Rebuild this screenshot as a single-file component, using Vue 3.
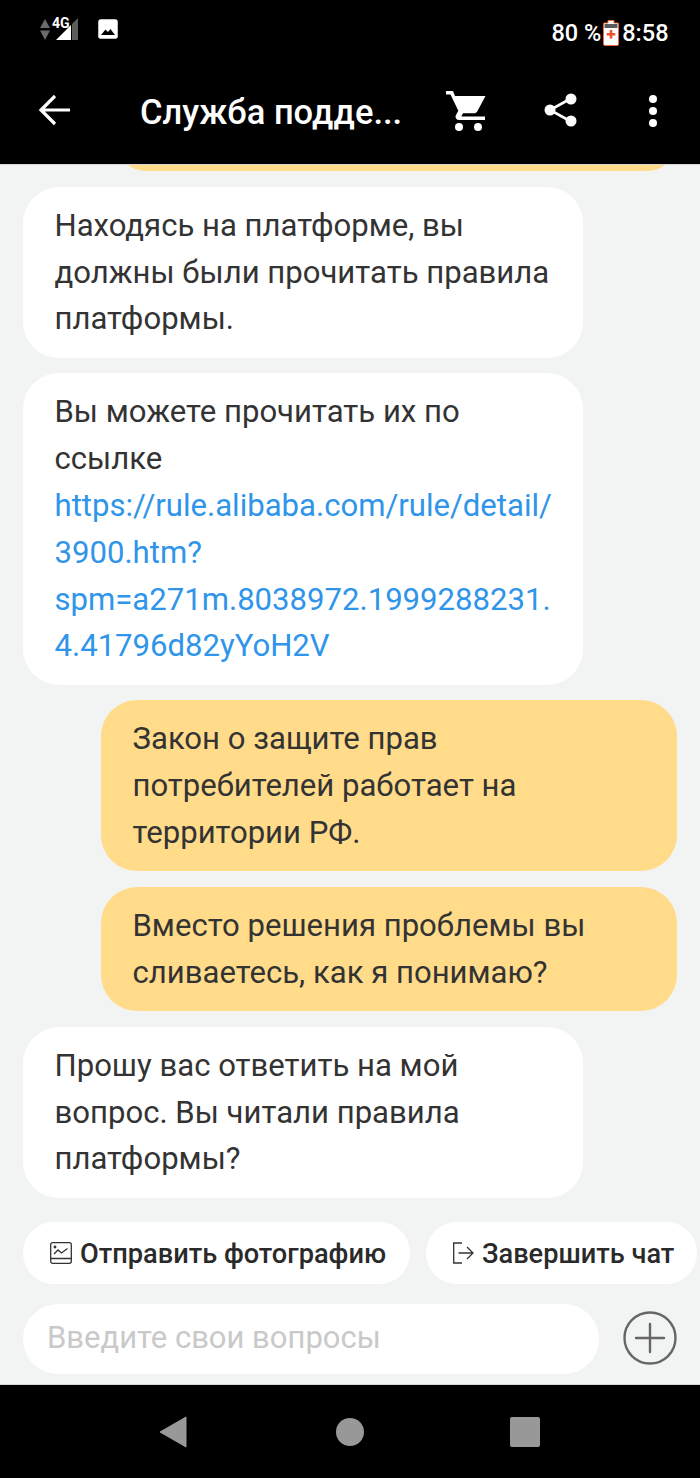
<script setup>
const messages = [
  { id: 1, mine: false, lines: ['Находясь на платформе, вы', 'должны были прочитать правила', 'платформы.'] },
  {
    id: 2,
    mine: false,
    lines: ['Вы можете прочитать их по', 'ссылке'],
    link: ['https://rule.alibaba.com/rule/detail/', '3900.htm?', 'spm=a271m.8038972.1999288231.', '4.41796d82yYoH2V']
  },
  { id: 3, mine: true, lines: ['Закон о защите прав', 'потребителей работает на', 'территории РФ.'] },
  { id: 4, mine: true, lines: ['Вместо решения проблемы вы', 'сливаетесь, как я понимаю?'] },
  { id: 5, mine: false, lines: ['Прошу вас ответить на мой', 'вопрос. Вы читали правила', 'платформы?'] }
]
</script>

<template>
  <div class="phone">
    <header class="top">
      <div class="status">
        <div class="status-left">
          <svg class="signal" width="40" height="28" viewBox="0 0 40 28">
            <path d="M1 13 6 4l5 9z M1 15.500h10L6 25z" fill="#6a6a6a" />
            <text x="13" y="12.500" class="net">4G</text>
            <path d="M17 25 32 10v15z" fill="#fff" />
            <path d="M33 9l6-6v22h-6z" fill="#5c5c5c" />
          </svg>
          <svg class="pic" width="20" height="20" viewBox="0 0 20 20">
            <rect width="19.500" height="19.500" x="0.250" y="0.250" rx="2.500" fill="#fff" />
            <path d="M3 16 7.500 10.500 10 13l2.500-3 4.500 6z" fill="#000" />
          </svg>
        </div>
        <div class="status-right">
          <span class="pct">80 %</span>
          <svg class="batt" width="16" height="26" viewBox="0 0 16 26">
            <path d="M5 .5h6v2.500h3.500a1 1 0 0 1 1 1V24a1.500 1.500 0 0 1-1.500 1.500h-12A1.500 1.500 0 0 1 .5 24V4a1 1 0 0 1 1-1H5z" fill="#fff" stroke="#f0683a" />
            <path d="M1.500 4h13v4h-13z" fill="#5a5a5a" />
            <path d="M6.700 10h2.600v3h3v2.600h-3v3H6.700v-3h-3V13h3z" fill="#f0532c" />
          </svg>
          <span class="clock">8:58</span>
        </div>
      </div>
      <div class="toolbar">
        <svg class="back" width="34" height="32" viewBox="0 0 34 32">
          <path d="M32 16H3M17 2 3 16l14 14" fill="none" stroke="#fff" stroke-width="3.200" />
        </svg>
        <div class="title">Служба подде...</div>
        <svg class="cart" width="42" height="42" viewBox="0 0 42 42">
          <path d="M1 1h7l2 5h30.500l-8 15c-.8 1.500-2 2.300-3.500 2.300H18l-1.700 3.200h23.700v3.500H14c-2.600 0-4.300-2.800-3-5l2.300-4.200L5.500 4.500H1z" fill="#fff" />
          <circle cx="14" cy="37" r="4" fill="#fff" />
          <circle cx="33" cy="37" r="4" fill="#fff" />
        </svg>
        <svg class="share" width="34" height="34" viewBox="0 0 34 34">
          <path d="M26 6 6 17l20 11" fill="none" stroke="#fff" stroke-width="2.600" />
          <circle cx="27" cy="6" r="5.500" fill="#fff" />
          <circle cx="6" cy="17" r="5.500" fill="#fff" />
          <circle cx="27" cy="28" r="5.500" fill="#fff" />
        </svg>
        <div class="more"><i></i><i></i><i></i></div>
      </div>
    </header>

    <main class="chat">
      <div class="list">
        <div class="cut"></div>
        <div v-for="m in messages" :key="m.id" class="bubble" :class="{ mine: m.mine }">
          <div v-for="line in m.lines" :key="line">{{ line }}</div>
          <a v-for="line in m.link" :key="line" class="link">{{ line }}</a>
        </div>
      </div>

      <div class="chips">
        <div class="chip first">
          <svg width="22" height="22" viewBox="0 0 22 22" fill="none" stroke="#333" stroke-width="1.300">
            <rect x="0.700" y="0.700" width="20.600" height="20.600" rx="2" />
            <path d="M0.700 16.500h20.600M4 12l4-4 3.500 3 6-4.500" />
            <circle cx="5" cy="5" r="0.800" />
          </svg>
          <span>Отправить фотографию</span>
        </div>
        <div class="chip second">
          <svg width="22" height="22" viewBox="0 0 22 22" fill="none" stroke="#333" stroke-width="1.300">
            <path d="M10 1H1.700v20H10M6.500 11H21M15 5l6 6-6 6" />
          </svg>
          <span>Завершить чат</span>
        </div>
      </div>

      <div class="composer">
        <div class="input">Введите свои вопросы</div>
        <svg class="plus" width="54" height="54" viewBox="0 0 54 54" fill="none" stroke="#666" stroke-width="2.400">
          <circle cx="27" cy="27" r="25.500" />
          <path d="M13 27h28M27 13v28" stroke-linecap="round" />
        </svg>
      </div>
    </main>

    <footer class="nav">
      <svg width="28" height="32" viewBox="0 0 28 32"><path d="M27 1v30L1 16z" fill="#989898" stroke="#989898" stroke-linejoin="round" /></svg>
      <span class="dot"></span>
      <span class="sq"></span>
    </footer>
  </div>
</template>

<style scoped>
.phone {
  width: 700px;
  height: 1478px;
  display: flex;
  flex-direction: column;
  background: #000;
  font-family: Roboto, "Noto Sans", sans-serif;
  overflow: hidden;
}

.top {
  height: 164px;
  flex: none;
  color: #fff;
}

.status {
  height: 64px;
  display: flex;
  justify-content: space-between;
  padding: 0 31.500px 0 39px;
}

.status-left {
  display: flex;
  align-items: flex-start;
  gap: 19px;
  padding-top: 15px;
}

.pic {
  margin-top: 4px;
}

.net {
  font-size: 14px;
  font-weight: 700;
  fill: #fff;
}

.status-right {
  display: flex;
  align-items: center;
  font-size: 23.500px;
  font-weight: 500;
  padding-top: 2px;
}

.batt {
  margin: 0 3px 0 2px;
}

.toolbar {
  height: 100px;
  display: flex;
  align-items: center;
  padding-left: 38px;
}

.back {
  flex: none;
  margin-top: -8px;
}

.title {
  margin-left: 68px;
  width: 305px;
  flex: none;
  font-size: 34.500px;
  font-weight: 500;
  white-space: nowrap;
  margin-top: -4px;
}

.cart {
  flex: none;
  margin-top: -7px;
}

.share {
  flex: none;
  margin-left: 57px;
  margin-top: -8px;
}

.more {
  margin-left: 71px;
  margin-top: -7px;
  display: flex;
  flex-direction: column;
  gap: 4px;
}

.more i {
  width: 8px;
  height: 8px;
  border-radius: 50%;
  background: #fff;
}

.chat {
  height: 1221px;
  flex: none;
  background: #f2f4f4;
  border-top: 1px solid #d8d8d8;
  border-bottom: 1px solid #d8d8d8;
  box-sizing: border-box;
  display: flex;
  flex-direction: column;
  overflow: hidden;
}

.list {
  display: flex;
  flex-direction: column;
  gap: 15.600px;
  flex: none;
}

.cut {
  height: 60px;
  width: 561px;
  margin: -53.800px 0 0 116px;
  background: #ffdb8a;
  border-radius: 36px;
}

.bubble {
  width: 560px;
  margin-left: 23px;
  box-sizing: border-box;
  padding: 16px 0 14.600px 31.500px;
  background: #fff;
  border-radius: 36px;
  font-size: 31.100px;
  line-height: 46.800px;
  color: #333;
  white-space: nowrap;
}

.bubble.mine {
  width: 576px;
  margin-left: 101px;
  background: #ffdb8a;
}

.link {
  display: block;
  color: #2f95ea;
}

.chips {
  display: flex;
  gap: 16px;
  margin: 24.200px 0 0 23px;
}

.chip {
  height: 62px;
  flex: none;
  box-sizing: border-box;
  display: flex;
  align-items: center;
  gap: 8px;
  background: #fff;
  border-radius: 31px;
  font-size: 27.200px;
  font-weight: 500;
  color: #2a2a2a;
  white-space: nowrap;
}

.chip span {
  padding-top: 2px;
}

.first {
  width: 387px;
  padding-left: 27px;
}

.second {
  width: 271px;
  padding-left: 26px;
}

.composer {
  display: flex;
  align-items: center;
  margin: 20px 0 0 23px;
}

.input {
  width: 576px;
  height: 70px;
  box-sizing: border-box;
  padding: 0 24px 2px;
  display: flex;
  align-items: center;
  background: #fff;
  border-radius: 35px;
  font-size: 31px;
  color: #c9c9c9;
}

.plus {
  margin-left: 24px;
  flex: none;
  margin-top: -1px;
}

.nav {
  flex: 1;
  display: flex;
  align-items: center;
  padding-left: 159px;
}

.dot {
  width: 28px;
  height: 28px;
  margin-left: 149px;
  border-radius: 50%;
  background: #989898;
}

.sq {
  width: 30px;
  height: 30px;
  margin-left: 146px;
  border-radius: 2px;
  background: #989898;
}
</style>
